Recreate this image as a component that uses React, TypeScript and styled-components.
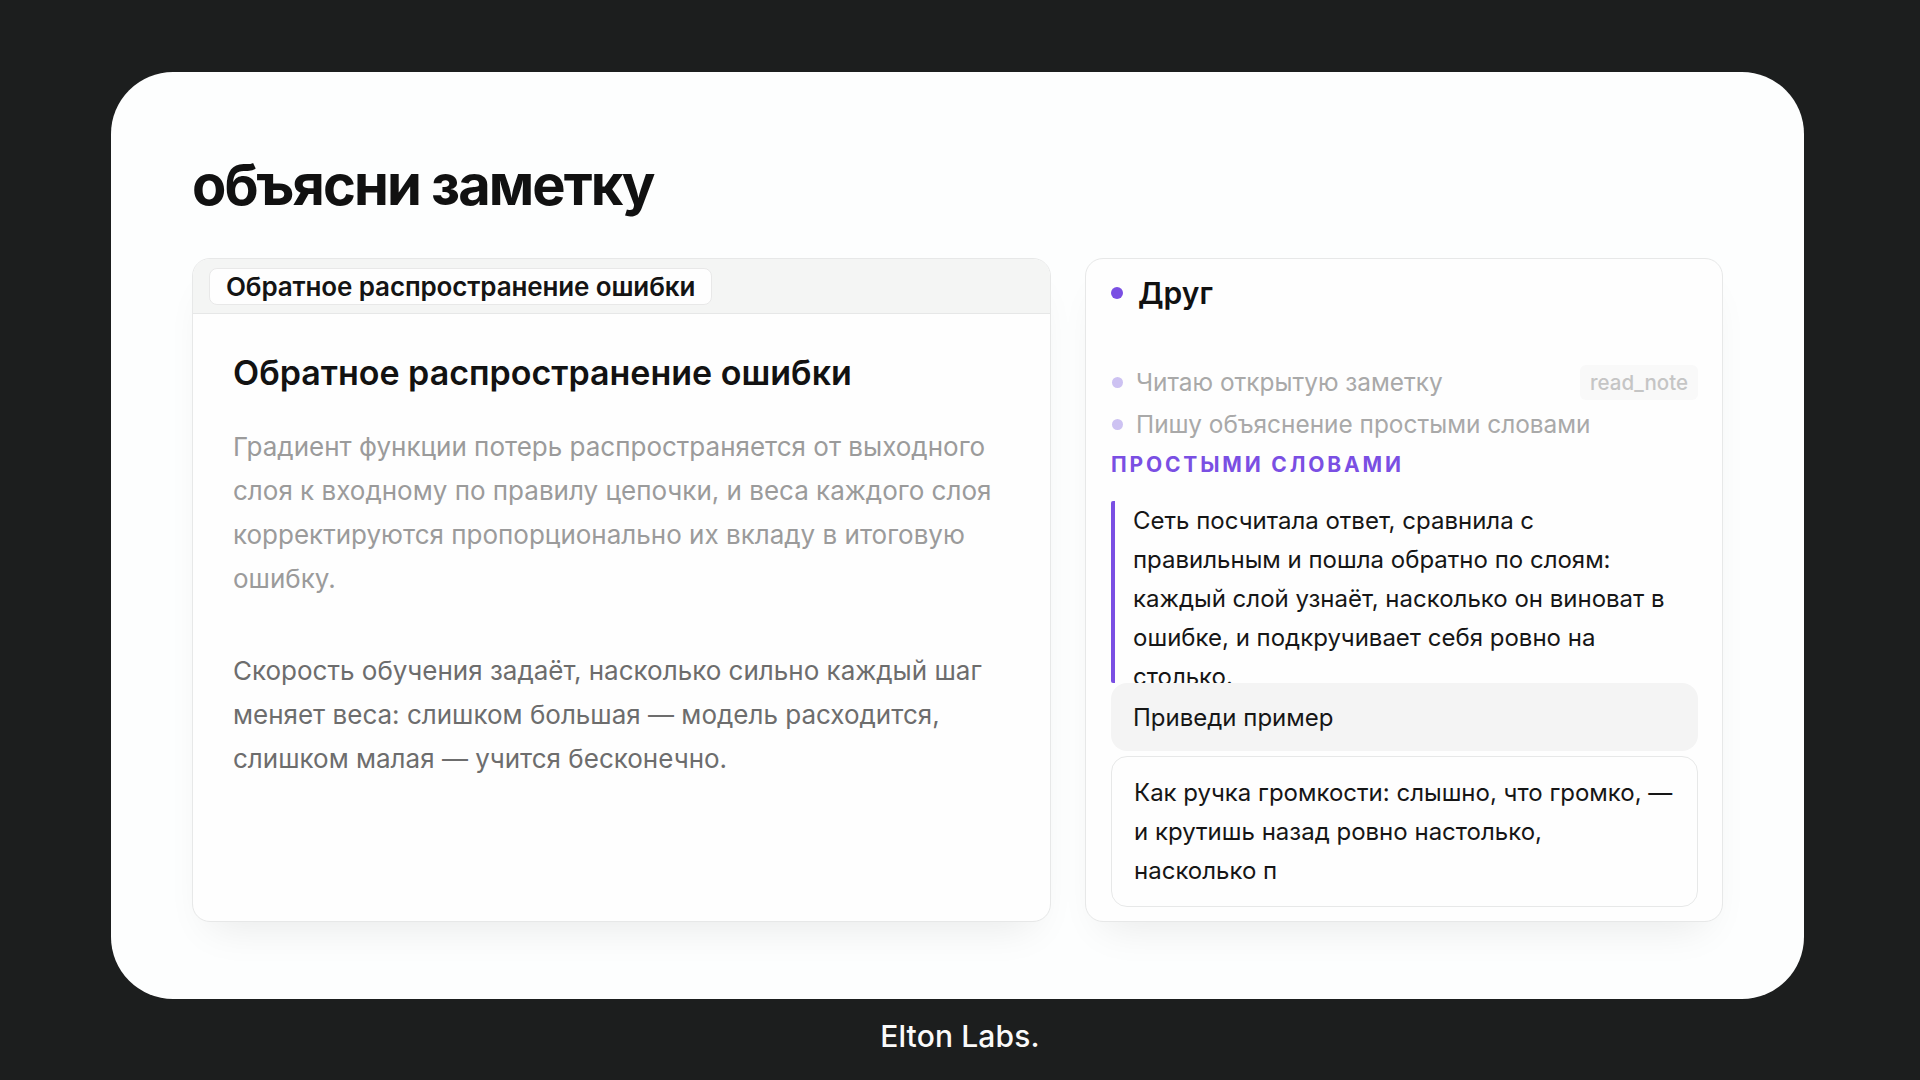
import * as React from 'react';
import styled, { createGlobalStyle } from 'styled-components';

const GlobalStyle = createGlobalStyle`
  html, body {
    margin: 0;
    padding: 0;
    background: #1c1e1e;
  }
  * {
    box-sizing: border-box;
  }
`;

const Page = styled.div`
  width: 1920px;
  height: 1080px;
  display: flex;
  flex-direction: column;
  padding: 72px 116px 0 111px;
  font-family: Inter, 'Noto Sans', sans-serif;
  background: #1c1e1e;
`;

const Sheet = styled.div`
  height: 927px;
  background: #fdfefe;
  border-radius: 62px;
  padding: 85px 81px 0 81px;
  display: flex;
  flex-direction: column;
`;

const Title = styled.h1`
  margin: 0 0 45px 0;
  font-size: 56px;
  line-height: 1;
  font-weight: 700;
  letter-spacing: -0.035em;
  color: #111;
`;

const Columns = styled.div`
  display: grid;
  grid-template-columns: 859px 638px;
  gap: 34px;
  height: 664px;
`;

const Card = styled.div`
  background: #fefefe;
  border: 1px solid #e7e8e8;
  border-radius: 18px;
  box-shadow: 0 22px 40px -18px rgba(0, 0, 0, 0.09);
  overflow: hidden;
  display: flex;
  flex-direction: column;
`;

const TabBar = styled.div`
  height: 55px;
  flex-shrink: 0;
  background: #f4f5f4;
  border-bottom: 1px solid #e6e7e7;
  display: flex;
  align-items: center;
  padding-left: 16px;
`;

const Tab = styled.div`
  height: 37px;
  display: flex;
  align-items: center;
  padding: 0 16px;
  background: #fefefe;
  border: 1px solid #e8e8e8;
  border-radius: 8px;
  font-size: 26px;
  font-weight: 600;
  color: #141414;
  letter-spacing: -0.005em;
`;

const NoteBody = styled.div`
  padding: 37px 41px 0 40px;
`;

const NoteHeading = styled.h2`
  margin: 0 0 30px 0;
  font-size: 34px;
  line-height: 44px;
  font-weight: 600;
  color: #121212;
`;

const Para = styled.p<{ $tone: 'light' | 'dark' }>`
  margin: 0 0 48px 0;
  font-size: 26px;
  line-height: 44px;
  color: ${(p) => (p.$tone === 'light' ? '#9b9b9b' : '#6d6d6d')};
`;

const ChatCard = styled(Card)`
  padding: 13px 24px 14px 25px;

  & > * {
    flex-shrink: 0;
  }
`;

const ChatHeader = styled.div`
  display: flex;
  align-items: center;
  gap: 15px;
  height: 42px;
  font-size: 30px;
  font-weight: 600;
  color: #111;
  margin-bottom: 47px;
`;

const Dot = styled.span<{ $size: number; $color: string }>`
  width: ${(p) => p.$size}px;
  height: ${(p) => p.$size}px;
  border-radius: 50%;
  background: ${(p) => p.$color};
  flex-shrink: 0;
`;

const Step = styled.div`
  display: flex;
  align-items: center;
  gap: 13px;
  height: 42px;
  font-size: 24.4px;
  color: #a9a9a9;
  padding-left: 1px;
`;

const StepText = styled.span`
  flex: 1;
`;

const ToolBadge = styled.span`
  background: #f9f9f9;
  color: #c5c5c5;
  font-size: 20.5px;
  font-weight: 500;
  padding: 5px 10px;
  border-radius: 6px;
`;

const Label = styled.div`
  margin-top: 6px;
  height: 28px;
  line-height: 28px;
  font-size: 21px;
  font-weight: 700;
  letter-spacing: 0.135em;
  color: #7a4fe3;
`;

const Quote = styled.div`
  margin-top: 22px;
  height: 182px;
  overflow: hidden;
  border-left: 4px solid #7a4fe3;
  border-radius: 2px;
  padding: 0 22px 0 18px;
  font-size: 24px;
  line-height: 39px;
  color: #161616;
`;

const Prompt = styled.div`
  height: 68px;
  display: flex;
  align-items: center;
  padding: 0 22px;
  background: #f4f4f4;
  border-radius: 16px;
  font-size: 24px;
  color: #161616;
`;

const Answer = styled.div`
  margin-top: 5px;
  border: 1px solid #e7e8e8;
  border-radius: 16px;
  padding: 16px 20px 16px 22px;
  font-size: 24px;
  line-height: 39px;
  color: #161616;
`;

const Footer = styled.div`
  flex: 1;
  display: flex;
  align-items: center;
  justify-content: center;
  padding: 0 0 8px 5px;
  font-size: 30px;
  font-weight: 500;
  color: #fafafa;
  letter-spacing: 0.005em;
`;

export default function App() {
  return (
    <>
      <GlobalStyle />
      <Page>
        <Sheet>
          <Title>объясни заметку</Title>
          <Columns>
            <Card>
              <TabBar>
                <Tab>Обратное распространение ошибки</Tab>
              </TabBar>
              <NoteBody>
                <NoteHeading>Обратное распространение ошибки</NoteHeading>
                <Para $tone="light">
                  Градиент функции потерь распространяется от выходного слоя к входному по
                  правилу цепочки, и веса каждого слоя корректируются пропорционально их
                  вкладу в итоговую ошибку.
                </Para>
                <Para $tone="dark">
                  Скорость обучения задаёт, насколько сильно каждый шаг меняет веса: слишком
                  большая — модель расходится, слишком малая — учится бесконечно.
                </Para>
              </NoteBody>
            </Card>
            <ChatCard>
              <ChatHeader>
                <Dot $size={12} $color="#7a4fe3" />
                Друг
              </ChatHeader>
              <Step>
                <Dot $size={11} $color="#cdc2f2" />
                <StepText>Читаю открытую заметку</StepText>
                <ToolBadge>read_note</ToolBadge>
              </Step>
              <Step>
                <Dot $size={11} $color="#cdc2f2" />
                <StepText>Пишу объяснение простыми словами</StepText>
              </Step>
              <Label>ПРОСТЫМИ СЛОВАМИ</Label>
              <Quote>
                Сеть посчитала ответ, сравнила с правильным и пошла обратно по слоям:
                каждый слой узнаёт, насколько он виноват в ошибке, и подкручивает себя
                ровно на столько.
              </Quote>
              <Prompt>Приведи пример</Prompt>
              <Answer>
                Как ручка громкости: слышно, что громко,&nbsp;— и крутишь назад ровно
                настолько,
                <br />
                насколько п
              </Answer>
            </ChatCard>
          </Columns>
        </Sheet>
        <Footer>Elton Labs.</Footer>
      </Page>
    </>
  );
}
